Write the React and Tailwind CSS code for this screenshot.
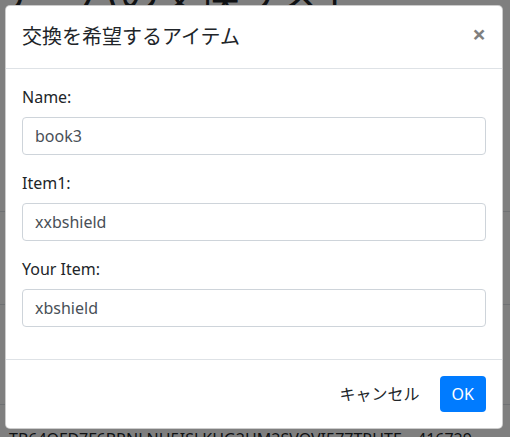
export default function App() {
  const font = { fontFamily: '"Noto Sans", "Noto Sans CJK JP", sans-serif' };
  const fields = [
    { label: "Name:", value: "book3" },
    { label: "Item1:", value: "xxbshield" },
    { label: "Your Item:", value: "xbshield" },
  ];
  return (
    <div
      className="relative w-[510px] h-[437px] overflow-hidden bg-white text-[#212529]"
      style={font}
    >
      {/* background page */}
      <div className="flex flex-col">
        <div className="h-[14px] overflow-hidden">
          <div className="-mt-[26px] text-[40px] leading-[40px] whitespace-nowrap pl-[0px]">
            テーバの交換リスト
          </div>
        </div>
        <div className="h-[198px] border-b border-[#dee2e6]"></div>
        <div className="h-[93px] border-b border-[#dee2e6]"></div>
        <div className="h-[100px] border-b border-[#dee2e6]"></div>
        <div className="flex pt-[22px] pl-[9px] text-[16px] leading-6 whitespace-nowrap">
          <span className="w-[408px]">TB64QFD7F6BRNLNH5ISLKHG2HM2SVOVI577TRUTE</span>
          <span>416729</span>
        </div>
      </div>

      {/* overlay */}
      <div className="absolute inset-0 bg-black/50"></div>

      {/* modal */}
      <div className="absolute left-[5px] top-[5px] w-[498px] bg-white border border-black/20 rounded-[5px]">
        <div className="flex items-start justify-between p-4 border-b border-[#dee2e6]">
          <h5 className="text-[20px] leading-[30px] font-normal m-0">
            交換を希望するアイテム
          </h5>
          <button className="p-4 -m-4 ml-auto text-[24px] font-bold leading-none text-black opacity-50">
            ×
          </button>
        </div>
        <div className="p-4">
          {fields.map((f) => (
            <div key={f.label} className="mb-4">
              <label className="block mb-2 text-[16px] leading-6">{f.label}</label>
              <input
                readOnly
                value={f.value}
                className="block w-full h-[38px] px-3 py-1.5 text-[16px] leading-6 text-[#495057] bg-white border border-[#ced4da] rounded-[4px] outline-none"
                style={font}
              />
            </div>
          ))}
        </div>
        <div className="flex items-center justify-end p-3 border-t border-[#dee2e6]">
          <button className="m-1 px-3 py-1.5 text-[16px] leading-6 text-[#212529] rounded-[4px]">
            キャンセル
          </button>
          <button className="m-1 px-3 py-1.5 text-[16px] leading-6 text-white bg-[#007bff] rounded-[4px]">
            OK
          </button>
        </div>
      </div>
    </div>
  );
}
